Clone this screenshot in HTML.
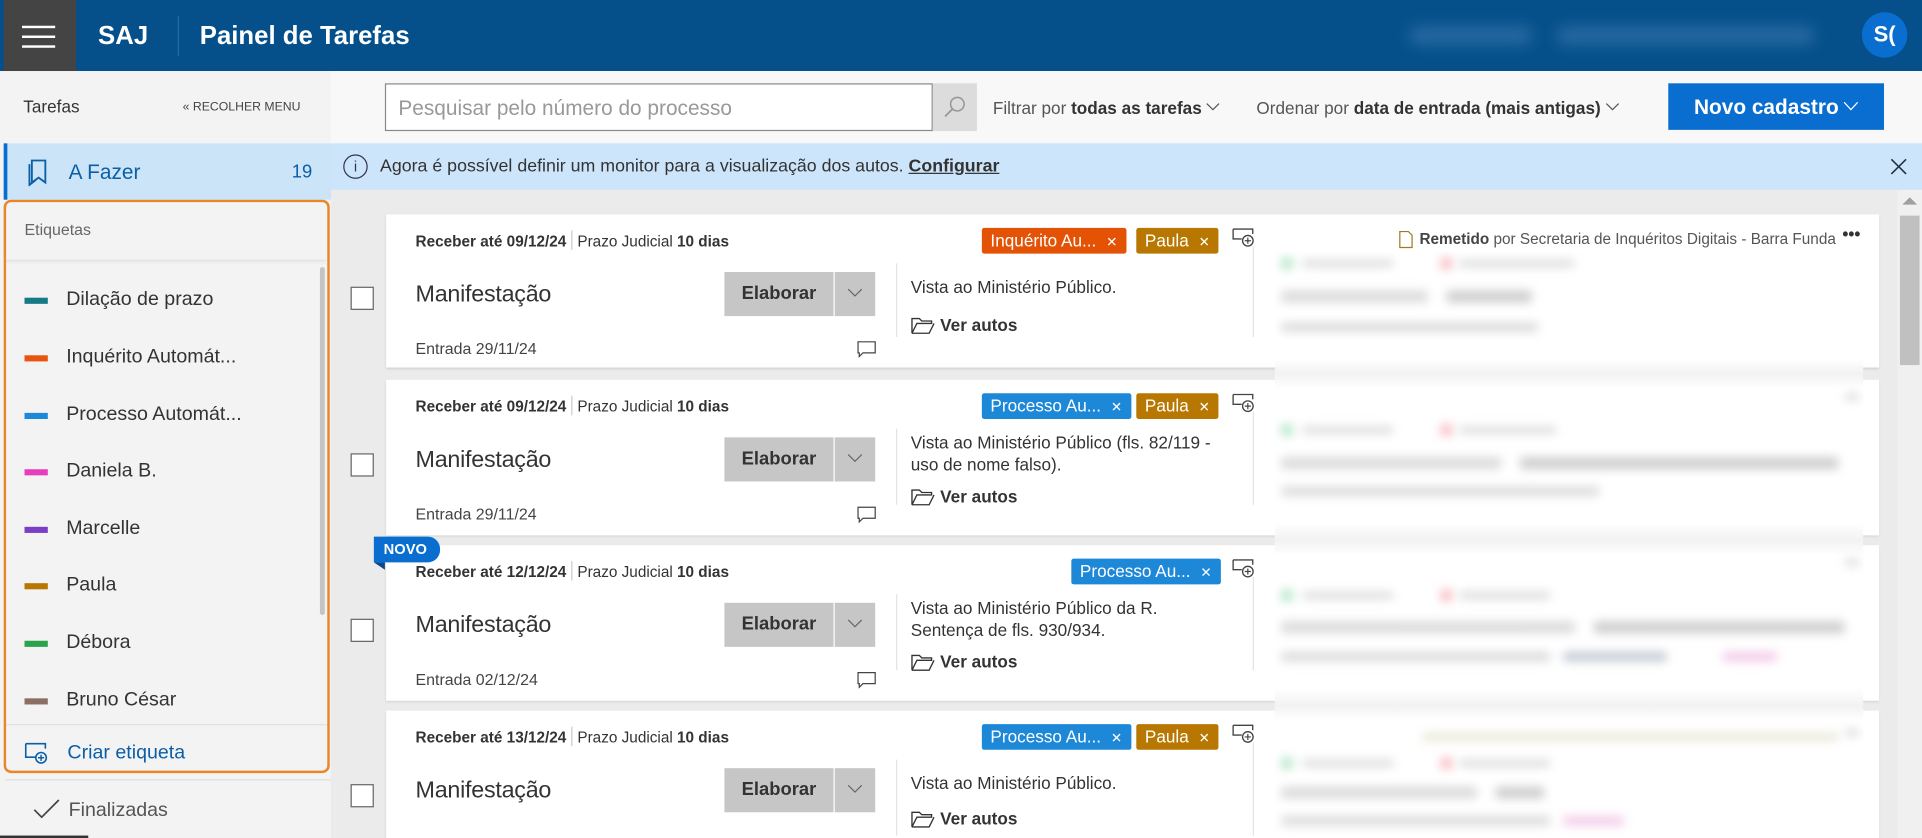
<!DOCTYPE html>
<html><head><meta charset="utf-8">
<style>
html,body{margin:0;padding:0;width:1922px;height:838px;overflow:hidden;background:#ebebeb}
#w{position:absolute;left:0;top:0;width:1568px;height:684px;transform:scale(1.22577,1.22515);transform-origin:0 0;font-family:"Liberation Sans",sans-serif;color:#333;overflow:hidden;background:#ebebeb}
.a{position:absolute}
.hdr{left:0;top:0;width:1568px;height:58px;background:#05508b}
.side{left:0;top:58px;width:270px;height:626px;background:#f3f3f3}
.chip{position:absolute;left:20px;width:19px;height:5px}
.lab{position:absolute;left:54px;font-size:16px;color:#333}
.card{position:absolute;left:315px;width:1218px;background:#fff;box-shadow:0 1px 2px rgba(0,0,0,.12)}
.cb{position:absolute;left:286px;width:17px;height:17px;border:1px solid #666;background:#fff}
.t1{position:absolute;left:24px;top:13px;font-size:12.5px;white-space:nowrap}
.t1 b{color:#333}
.t1 .sep{display:inline-block;width:1px;height:16px;background:#ccc;vertical-align:-3px;margin:0 4px}
.mf{position:absolute;left:24px;font-size:19px;color:#333;font-weight:normal;letter-spacing:-.2px}
.el{position:absolute;left:276px;width:89px;height:36px;background:#c6c6c6;font-size:15px;font-weight:bold;color:#333;text-align:center;line-height:36px}
.dd{position:absolute;left:366px;width:33px;height:36px;background:#c6c6c6}
.vd{position:absolute;left:416px;width:1px;background:#e3e3e3}
.vs{position:absolute;left:428px;font-size:14px;color:#333;line-height:18px;width:262px}
.va{position:absolute;left:428px;font-size:14px;font-weight:bold;color:#333}
.en{position:absolute;left:24px;font-size:13px;color:#444}
.tag{position:absolute;top:11px;height:21px;border-radius:2px;color:#fff;font-size:14px;line-height:21px;padding:0 7px;white-space:nowrap}
.tag i{font-style:normal;font-size:11px;margin-left:8px;font-weight:300}
.blur{position:absolute;left:1040px;width:480px;background:#fff;overflow:hidden}
.bb{position:absolute;background:#dcdcdc;filter:blur(4px);border-radius:3px}
.chev{display:inline-block;vertical-align:2px;margin-left:4px}
</style></head><body><div id="w">

<!-- header -->
<div class="a hdr"></div>
<div class="a" style="left:3px;top:0;width:59px;height:58px;background:#444"></div>
<div class="a" style="left:18px;top:21px;width:27px;height:2px;background:#fff;box-shadow:0 8px 0 #fff,0 16px 0 #fff"></div>
<div class="a" style="left:80px;top:18px;font-size:21px;font-weight:bold;color:#fff">SAJ</div>
<div class="a" style="left:145px;top:13px;width:1px;height:33px;background:#2b6aa3"></div>
<div class="a" style="left:163px;top:18px;font-size:21px;font-weight:bold;color:#fff">Painel de Tarefas</div>
<div class="a" style="left:1150px;top:22px;width:100px;height:14px;background:#3a76ad;filter:blur(6px);border-radius:6px;opacity:.7"></div>
<div class="a" style="left:1270px;top:22px;width:210px;height:14px;background:#3a76ad;filter:blur(6px);border-radius:6px;opacity:.7"></div>
<div class="a" style="left:1519px;top:10px;width:37px;height:37px;border-radius:50%;background:#0a6ed1;color:#fff;font-size:18px;font-weight:bold;text-align:center;line-height:37px">S(</div>

<!-- sidebar -->
<div class="a side"></div>
<div class="a" style="left:19px;top:79px;font-size:14px;color:#333">Tarefas</div>
<div class="a" style="left:149px;top:82px;font-size:10px;color:#444">&#171; RECOLHER MENU</div>
<div class="a" style="left:3px;top:117px;width:267px;height:46px;background:#cce4f7"></div>
<div class="a" style="left:3px;top:117px;width:3px;height:46px;background:#0a6ed1"></div>
<svg class="a" style="left:22px;top:130px" width="18" height="22" viewBox="0 0 18 22"><path d="M4 1h11v18l-5.5-4L4 19z M2 4v17l5-4" fill="none" stroke="#0a5fa8" stroke-width="1.5"/></svg>
<div class="a" style="left:56px;top:131px;font-size:17px;color:#0a5fa8">A Fazer</div>
<div class="a" style="left:238px;top:132px;font-size:15px;color:#0a5fa8">19</div>

<div class="a" style="left:4px;top:165px;width:263px;height:47px;background:#f3f3f3;box-shadow:0 2px 3px rgba(0,0,0,.08)"></div>
<div class="a" style="left:20px;top:180px;font-size:13px;color:#666">Etiquetas</div>
<div class="a" style="left:261px;top:218px;width:4px;height:284px;background:#c4c4c4;border-radius:2px"></div>

<div class="chip" style="top:243px;background:#167a86"></div><div class="lab" style="top:236px">Dilação de prazo</div>
<div class="chip" style="top:290px;background:#e8530f"></div><div class="lab" style="top:283px">Inquérito Automát...</div>
<div class="chip" style="top:337px;background:#1e88d8"></div><div class="lab" style="top:330px">Processo Automát...</div>
<div class="chip" style="top:383px;background:#e83dbd"></div><div class="lab" style="top:376px">Daniela B.</div>
<div class="chip" style="top:430px;background:#7a3fc4"></div><div class="lab" style="top:423px">Marcelle</div>
<div class="chip" style="top:476px;background:#b87700"></div><div class="lab" style="top:469px">Paula</div>
<div class="chip" style="top:523px;background:#2aa34a"></div><div class="lab" style="top:516px">Débora</div>
<div class="chip" style="top:570px;background:#8d6e63"></div><div class="lab" style="top:563px">Bruno César</div>

<div class="a" style="left:4px;top:591px;width:263px;height:1px;background:#e0e0e0"></div>
<svg class="a" style="left:20px;top:606px" width="20" height="18" viewBox="0 0 20 18"><path d="M1 1h16v4 M1 1v11h8" fill="none" stroke="#0a5fa8" stroke-width="1.3"/><circle cx="13.5" cy="12.5" r="4.3" fill="none" stroke="#0a5fa8" stroke-width="1.3"/><path d="M13.5 10v5M11 12.5h5" stroke="#0a5fa8" stroke-width="1.2"/></svg>
<div class="a" style="left:55px;top:606px;font-size:16px;color:#0a5fa8">Criar etiqueta</div>
<div class="a" style="left:3px;top:163px;width:262px;height:464px;border:2px solid #e8862a;border-radius:6px"></div>
<div class="a" style="left:4px;top:636px;width:266px;height:1px;background:#dedede"></div>
<svg class="a" style="left:27px;top:652px" width="22" height="16" viewBox="0 0 22 16"><path d="M1 9l6 6L21 1" fill="none" stroke="#444" stroke-width="1.4"/></svg>
<div class="a" style="left:56px;top:653px;font-size:16px;color:#555">Finalizadas</div>
<div class="a" style="left:0;top:682px;width:72px;height:2px;background:#333"></div>

<!-- toolbar -->
<div class="a" style="left:270px;top:58px;width:1298px;height:59px;background:#f8f8f8"></div>
<div class="a" style="left:314px;top:68px;width:445px;height:37px;border:1px solid #8a8a8a;background:#fff"></div>
<div class="a" style="left:325px;top:79px;font-size:17px;color:#999">Pesquisar pelo número do processo</div>
<div class="a" style="left:761px;top:68px;width:36px;height:39px;background:#dcdcdc"></div>
<svg class="a" style="left:769px;top:77px" width="20" height="20" viewBox="0 0 20 20"><circle cx="12" cy="8" r="5.5" fill="none" stroke="#999" stroke-width="1.3"/><path d="M8 12l-6 6" stroke="#999" stroke-width="1.5"/></svg>
<div class="a" style="left:810px;top:80px;font-size:14px;color:#555;white-space:nowrap">Filtrar por <b style="color:#333">todas as tarefas</b><svg class="chev" width="11" height="7"><path d="M.5.5l5 5 5-5" fill="none" stroke="#555"/></svg></div>
<div class="a" style="left:1025px;top:80px;font-size:14px;color:#555;white-space:nowrap">Ordenar por <b style="color:#333">data de entrada (mais antigas)</b><svg class="chev" width="11" height="7"><path d="M.5.5l5 5 5-5" fill="none" stroke="#555"/></svg></div>
<div class="a" style="left:1361px;top:68px;width:176px;height:38px;background:#0a6ed1;color:#fff;font-size:17px;font-weight:bold;line-height:40px;text-align:center">Novo cadastro<svg class="chev" width="12" height="8"><path d="M.5.5l5.5 6 5.5-6" fill="none" stroke="#fff"/></svg></div>

<!-- info bar -->
<div class="a" style="left:270px;top:117px;width:1298px;height:38px;background:#cde5fb"></div>
<div class="a" style="left:280px;top:126px;width:18px;height:18px;border:1.3px solid #335;border-radius:50%;font-size:12px;text-align:center;line-height:18px;color:#335">i</div>
<div class="a" style="left:310px;top:128px;font-size:14.5px;color:#333;white-space:nowrap">Agora é possível definir um monitor para a visualização dos autos. <b style="text-decoration:underline">Configurar</b></div>
<svg class="a" style="left:1542px;top:129px" width="14" height="14" viewBox="0 0 14 14"><path d="M1 1l12 12M13 1L1 13" stroke="#234" stroke-width="1.3"/></svg>

<!-- scrollbar -->
<div class="a" style="left:1548px;top:155px;width:20px;height:529px;background:#f0f0f0"></div>
<div class="a" style="left:1552px;top:161px;width:0;height:0;border-left:6px solid transparent;border-right:6px solid transparent;border-bottom:6px solid #a0a0a0"></div>
<div class="a" style="left:1550px;top:176px;width:16px;height:122px;background:#c0c0c0"></div>

<!-- cards -->
<div class="card" style="top:175px;height:125px">
 <div class="t1"><b>Receber até 09/12/24</b><span class="sep"></span>Prazo Judicial <b>10 dias</b></div>
 <div class="mf" style="top:55px">Manifestação</div>
 <div class="el" style="top:47px">Elaborar</div><div class="dd" style="top:47px"><svg style="margin:13px 10px" width="13" height="8"><path d="M1 1l5.5 5.5L12 1" fill="none" stroke="#666"/></svg></div>
 <div class="vd" style="top:40px;height:60px"></div>
 <div class="vs" style="top:50px">Vista ao Ministério Público.</div>
 <div class="va" style="top:82px"><svg width="20" height="16" style="vertical-align:-3px;margin-right:4px"><path d="M1 3h6l2 2h8v2H5L1 15zM1 15h14l4-8" fill="none" stroke="#333" stroke-width="1.1"/></svg>Ver autos</div>
 <div class="en" style="top:102px">Entrada 29/11/24</div>
 <svg class="a" style="left:384px;top:103px" width="16" height="15"><path d="M1 1h14v9H5l-3 3V10H1z" fill="none" stroke="#444"/></svg>
 <div class="tag" style="left:486px;background:#e35205">Inquérito Au...<i>✕</i></div>
 <div class="tag" style="left:612px;background:#b87700">Paula<i>✕</i></div>
 <svg class="a" style="left:690px;top:11px" width="20" height="18" viewBox="0 0 20 18"><path d="M1 1h16v4 M1 1v8h7" fill="none" stroke="#444" stroke-width="1.1"/><circle cx="13" cy="10.5" r="4.3" fill="none" stroke="#444" stroke-width="1.1"/><path d="M13 8v5M10.5 10.5h5" stroke="#444"/></svg>
 <div class="a" style="left:707px;top:26px;width:1px;height:74px;background:#e3e3e3"></div>
 <svg class="a" style="left:826px;top:13px" width="12" height="15"><path d="M1 1h7l3 3v10H1z" fill="none" stroke="#a07a20"/></svg>
 <div class="a" style="left:843px;top:13px;font-size:12.5px;color:#555;white-space:nowrap"><b style="color:#444">Remetido</b> por Secretaria de Inquéritos Digitais - Barra Funda</div>
 <div class="a" style="left:1188px;top:8px;font-size:14px;font-weight:bold;color:#333">•••</div>
</div>

<div class="card" style="top:310px;height:127px">
 <div class="t1"><b>Receber até 09/12/24</b><span class="sep"></span>Prazo Judicial <b>10 dias</b></div>
 <div class="mf" style="top:55px">Manifestação</div>
 <div class="el" style="top:47px">Elaborar</div><div class="dd" style="top:47px"><svg style="margin:13px 10px" width="13" height="8"><path d="M1 1l5.5 5.5L12 1" fill="none" stroke="#666"/></svg></div>
 <div class="vd" style="top:40px;height:62px"></div>
 <div class="vs" style="top:42px">Vista ao Ministério Público (fls. 82/119 - uso de nome falso).</div>
 <div class="va" style="top:87px"><svg width="20" height="16" style="vertical-align:-3px;margin-right:4px"><path d="M1 3h6l2 2h8v2H5L1 15zM1 15h14l4-8" fill="none" stroke="#333" stroke-width="1.1"/></svg>Ver autos</div>
 <div class="en" style="top:102px">Entrada 29/11/24</div>
 <svg class="a" style="left:384px;top:103px" width="16" height="15"><path d="M1 1h14v9H5l-3 3V10H1z" fill="none" stroke="#444"/></svg>
 <div class="tag" style="left:486px;background:#1e88d8">Processo Au...<i>✕</i></div>
 <div class="tag" style="left:612px;background:#b87700">Paula<i>✕</i></div>
 <svg class="a" style="left:690px;top:11px" width="20" height="18" viewBox="0 0 20 18"><path d="M1 1h16v4 M1 1v8h7" fill="none" stroke="#444" stroke-width="1.1"/><circle cx="13" cy="10.5" r="4.3" fill="none" stroke="#444" stroke-width="1.1"/><path d="M13 8v5M10.5 10.5h5" stroke="#444"/></svg>
 <div class="a" style="left:707px;top:26px;width:1px;height:76px;background:#e3e3e3"></div>
</div>

<div class="card" style="top:445px;height:127px">
 <div class="t1" style="top:13px"><b>Receber até 12/12/24</b><span class="sep"></span>Prazo Judicial <b>10 dias</b></div>
 <div class="mf" style="top:55px">Manifestação</div>
 <div class="el" style="top:47px">Elaborar</div><div class="dd" style="top:47px"><svg style="margin:13px 10px" width="13" height="8"><path d="M1 1l5.5 5.5L12 1" fill="none" stroke="#666"/></svg></div>
 <div class="vd" style="top:40px;height:62px"></div>
 <div class="vs" style="top:42px">Vista ao Ministério Público da R.<br>Sentença de fls. 930/934.</div>
 <div class="va" style="top:87px"><svg width="20" height="16" style="vertical-align:-3px;margin-right:4px"><path d="M1 3h6l2 2h8v2H5L1 15zM1 15h14l4-8" fill="none" stroke="#333" stroke-width="1.1"/></svg>Ver autos</div>
 <div class="en" style="top:102px">Entrada 02/12/24</div>
 <svg class="a" style="left:384px;top:103px" width="16" height="15"><path d="M1 1h14v9H5l-3 3V10H1z" fill="none" stroke="#444"/></svg>
 <div class="tag" style="left:559px;background:#1e88d8">Processo Au...<i>✕</i></div>
 <svg class="a" style="left:690px;top:11px" width="20" height="18" viewBox="0 0 20 18"><path d="M1 1h16v4 M1 1v8h7" fill="none" stroke="#444" stroke-width="1.1"/><circle cx="13" cy="10.5" r="4.3" fill="none" stroke="#444" stroke-width="1.1"/><path d="M13 8v5M10.5 10.5h5" stroke="#444"/></svg>
 <div class="a" style="left:707px;top:26px;width:1px;height:76px;background:#e3e3e3"></div>
</div>
<div class="a" style="left:305px;top:438px;width:54px;height:21px;background:#0a6ed1;border-radius:0 10px 10px 0;color:#fff;font-size:12px;font-weight:bold;line-height:21px;text-indent:8px">NOVO</div>
<div class="a" style="left:305px;top:459px;width:0;height:0;border-top:6px solid #07498a;border-left:9px solid transparent"></div>

<div class="card" style="top:580px;height:110px">
 <div class="t1"><b>Receber até 13/12/24</b><span class="sep"></span>Prazo Judicial <b>10 dias</b></div>
 <div class="mf" style="top:55px">Manifestação</div>
 <div class="el" style="top:47px">Elaborar</div><div class="dd" style="top:47px"><svg style="margin:13px 10px" width="13" height="8"><path d="M1 1l5.5 5.5L12 1" fill="none" stroke="#666"/></svg></div>
 <div class="vd" style="top:40px;height:62px"></div>
 <div class="vs" style="top:50px">Vista ao Ministério Público.</div>
 <div class="va" style="top:80px"><svg width="20" height="16" style="vertical-align:-3px;margin-right:4px"><path d="M1 3h6l2 2h8v2H5L1 15zM1 15h14l4-8" fill="none" stroke="#333" stroke-width="1.1"/></svg>Ver autos</div>
 <div class="tag" style="left:486px;background:#1e88d8">Processo Au...<i>✕</i></div>
 <div class="tag" style="left:612px;background:#b87700">Paula<i>✕</i></div>
 <svg class="a" style="left:690px;top:11px" width="20" height="18" viewBox="0 0 20 18"><path d="M1 1h16v4 M1 1v8h7" fill="none" stroke="#444" stroke-width="1.1"/><circle cx="13" cy="10.5" r="4.3" fill="none" stroke="#444" stroke-width="1.1"/><path d="M13 8v5M10.5 10.5h5" stroke="#444"/></svg>
 <div class="a" style="left:707px;top:26px;width:1px;height:76px;background:#e3e3e3"></div>
</div>

<div class="cb" style="top:234px"></div>
<div class="cb" style="top:370px"></div>
<div class="cb" style="top:505px"></div>
<div class="cb" style="top:640px"></div>

<!-- blurred region -->
<div class="blur" style="top:205px;height:479px;background:linear-gradient(#fff 0,#fff 88px,#f2f2f2 100px,#fff 112px,#fff 222px,#f2f2f2 236px,#fff 248px,#fff 357px,#f2f2f2 371px,#fff 383px)">
 <div class="bb" style="left:5px;top:5px;width:10px;height:10px;background:#b8e8cb"></div><div class="bb" style="left:22px;top:7px;width:75px;height:6px"></div><div class="bb" style="left:135px;top:5px;width:10px;height:10px;background:#f8c0c4"></div><div class="bb" style="left:150px;top:7px;width:95px;height:6px"></div>
 <div class="bb" style="left:5px;top:32px;width:120px;height:10px"></div><div class="bb" style="left:140px;top:32px;width:70px;height:10px;background:#cfcfcf"></div>
 <div class="bb" style="left:5px;top:58px;width:210px;height:8px"></div>

 <div class="bb" style="left:5px;top:141px;width:10px;height:10px;background:#b8e8cb"></div><div class="bb" style="left:22px;top:143px;width:75px;height:6px"></div><div class="bb" style="left:135px;top:141px;width:10px;height:10px;background:#f8c0c4"></div><div class="bb" style="left:150px;top:143px;width:80px;height:6px"></div>
 <div class="bb" style="left:5px;top:168px;width:180px;height:10px"></div><div class="bb" style="left:200px;top:168px;width:260px;height:10px;background:#cfcfcf"></div>
 <div class="bb" style="left:5px;top:192px;width:260px;height:8px"></div>
 <div class="bb" style="left:465px;top:116px;width:12px;height:6px"></div>

 <div class="bb" style="left:5px;top:276px;width:10px;height:10px;background:#b8e8cb"></div><div class="bb" style="left:22px;top:278px;width:75px;height:6px"></div><div class="bb" style="left:135px;top:276px;width:10px;height:10px;background:#f8c0c4"></div><div class="bb" style="left:150px;top:278px;width:75px;height:6px"></div>
 <div class="bb" style="left:5px;top:302px;width:240px;height:10px"></div><div class="bb" style="left:260px;top:302px;width:205px;height:10px;background:#cfcfcf"></div>
 <div class="bb" style="left:5px;top:327px;width:220px;height:8px"></div><div class="bb" style="left:235px;top:327px;width:85px;height:8px;background:#c5ccd6"></div><div class="bb" style="left:365px;top:327px;width:45px;height:8px;background:#f3cdea"></div>
 <div class="bb" style="left:465px;top:251px;width:12px;height:6px"></div>

 <div class="bb" style="left:120px;top:393px;width:340px;height:7px;background:#ebe9da"></div>
 <div class="bb" style="left:5px;top:413px;width:10px;height:10px;background:#b8e8cb"></div><div class="bb" style="left:22px;top:415px;width:75px;height:6px"></div><div class="bb" style="left:135px;top:413px;width:10px;height:10px;background:#f8c0c4"></div><div class="bb" style="left:150px;top:415px;width:75px;height:6px"></div>
 <div class="bb" style="left:5px;top:437px;width:160px;height:10px"></div><div class="bb" style="left:180px;top:437px;width:40px;height:10px;background:#cfcfcf"></div>
 <div class="bb" style="left:5px;top:461px;width:220px;height:8px"></div><div class="bb" style="left:235px;top:461px;width:50px;height:8px;background:#f3cdea"></div>
 <div class="bb" style="left:465px;top:390px;width:12px;height:6px"></div>
</div>

</div></body></html>
